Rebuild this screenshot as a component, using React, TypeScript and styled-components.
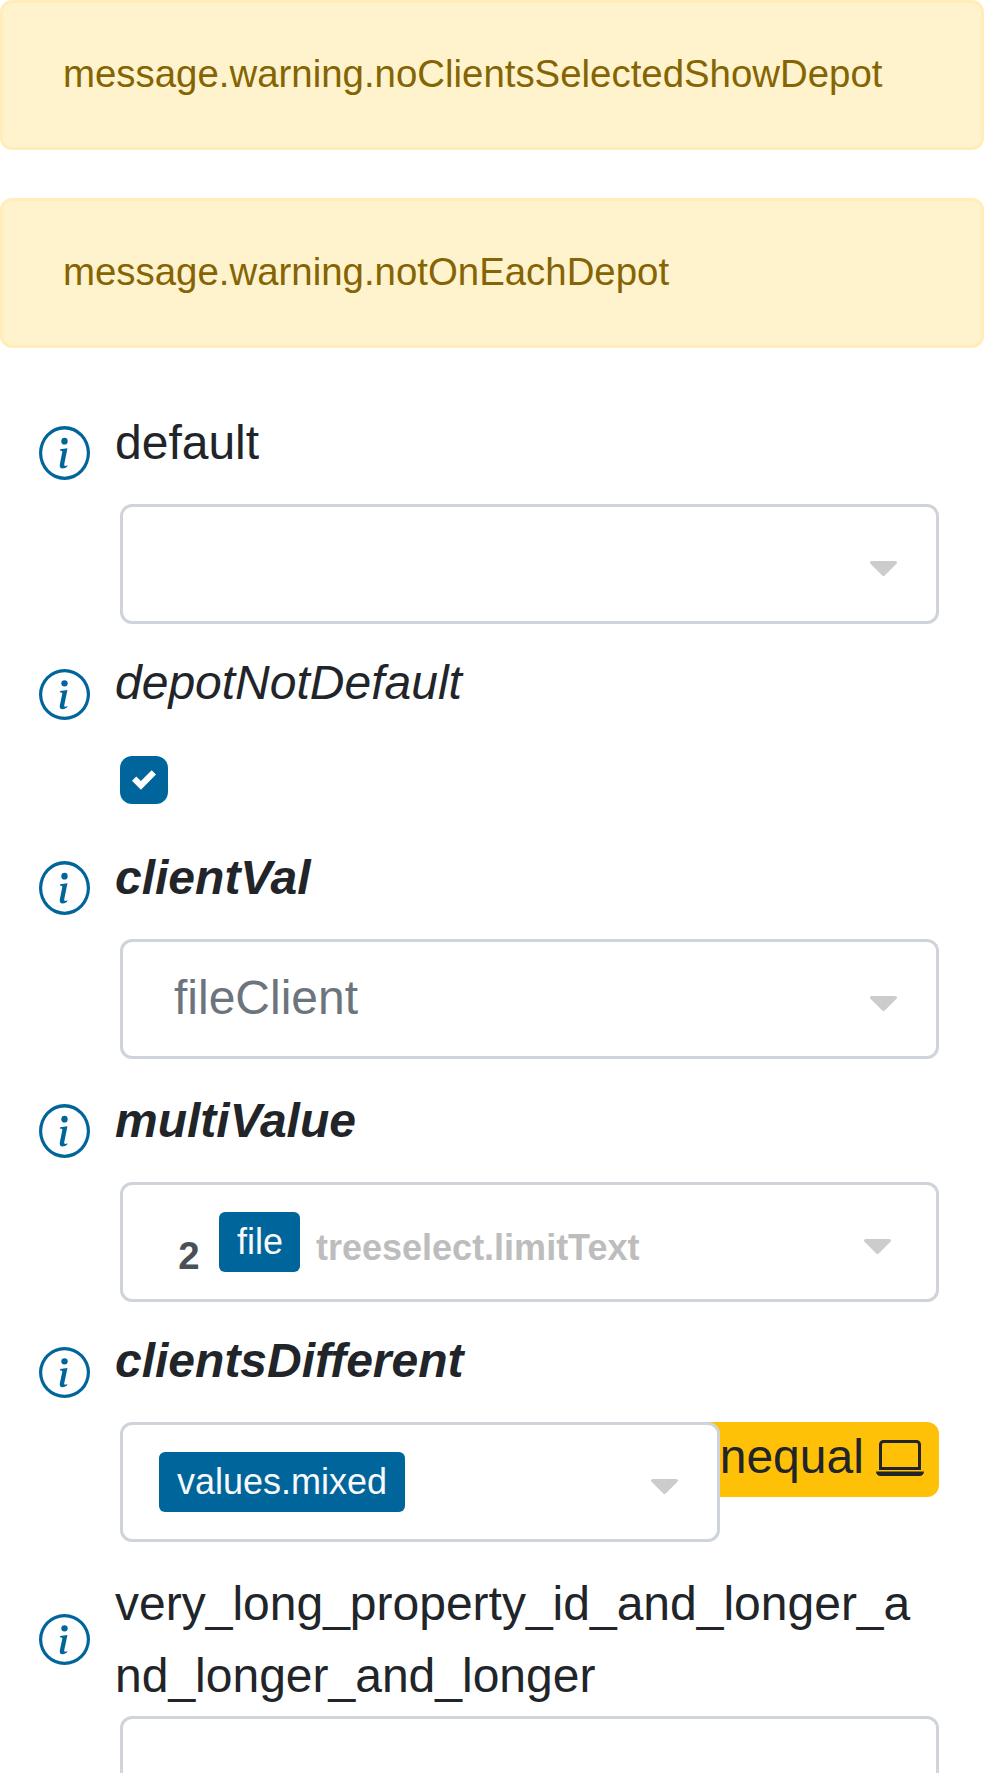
import React from "react";
import styled, { createGlobalStyle, css } from "styled-components";

const GlobalStyle = createGlobalStyle`
  *, *::before, *::after { box-sizing: border-box; }
  body {
    margin: 0;
    background: #fff;
    color: #212529;
    font-family: "Liberation Sans", Arial, sans-serif;
    font-size: 48px;
    line-height: 72px;
  }
`;

const Page = styled.main`
  width: 984px;
  height: 1773px;
  overflow: hidden;
`;

const Alert = styled.div`
  height: 150px;
  margin-bottom: 48px;
  padding: 36px 60px;
  border: 3px solid #ffeeba;
  border-radius: 12px;
  background: #fff3cd;
  color: #856404;
  font-size: 38.4px;
  line-height: 70px;
`;

const PropertyList = styled.section`
  padding-top: 11px;
`;

const Row = styled.div<{ $gap: number }>`
  display: flex;
  align-items: flex-start;
  margin-bottom: ${(p) => p.$gap}px;
`;

const IconCell = styled.div<{ $offset: number }>`
  flex: none;
  display: flex;
  width: 115px;
  padding: ${(p) => p.$offset}px 0 0 39px;
  color: #00659b;
`;

const Property = styled.div`
  width: 824px;
`;

const Label = styled.div<{ $italic?: boolean; $bold?: boolean; $height: number }>`
  height: ${(p) => p.$height}px;
  padding-right: 14px;
  word-break: break-all;
  font-style: ${(p) => (p.$italic ? "italic" : "normal")};
  font-weight: ${(p) => (p.$bold ? 700 : 400)};
`;

const ControlLine = styled.div`
  display: flex;
  align-items: flex-start;
  margin-left: 5px;
`;

const Select = styled.div<{ $narrow?: boolean; $multi?: boolean }>`
  position: relative;
  flex: none;
  display: flex;
  width: ${(p) => (p.$narrow ? 600 : 819)}px;
  height: 120px;
  padding: 0 39px 0 36px;
  border: 3px solid #ced4da;
  border-radius: 12px;
  background: #fff;
  ${(p) => p.$multi && css`padding-right: 45px;`}
`;

const Caret = styled.svg`
  flex: none;
  width: 27px;
  height: 27px;
  margin: 48px 0 0 auto;
  fill: #ccc;
`;

const Value = styled.span`
  padding: 20px 0 0 15px;
  color: #6c757d;
`;

const Count = styled.span`
  width: 60px;
  padding: 35px 0 0 19.2px;
  color: #495057;
  font-size: 38.4px;
  font-weight: 700;
`;

const Tag = styled.span<{ $width: number }>`
  flex: none;
  width: ${(p) => p.$width}px;
  height: 60px;
  margin-top: 27px;
  padding-left: 18px;
  border-radius: 6px;
  background: #00659b;
  color: #f8f9fa;
  font-size: 36px;
  line-height: 60px;
`;

const LimitText = styled.span`
  padding: 27px 0 0 16px;
  color: #bdbdbd;
  font-size: 36px;
  font-weight: 700;
`;

const Badge = styled.span`
  display: flex;
  height: 75px;
  margin-left: -39px;
  padding: 0 15px 0 12px;
  border-radius: 12px;
  background: #ffc107;
  line-height: 70px;
  white-space: pre;
`;

const LaptopSvg = styled.svg`
  width: 48px;
  height: 48px;
  margin: 12px 0 0 -1px;
`;

const Checkbox = styled.span`
  display: flex;
  align-items: center;
  justify-content: center;
  width: 48px;
  height: 48px;
  border-radius: 12px;
  background: #00659b;
`;

const InfoIcon = ({ height }: { height: number }) => (
  <svg width="51" height={height} viewBox="0 0 16 16" preserveAspectRatio="none" fill="currentColor">
    <path d="M8 15A7 7 0 1 0 8 1a7 7 0 0 0 0 14zm0 1A8 8 0 1 0 8 0a8 8 0 0 0 0 16z" fillRule="evenodd" />
    <path d="M8.93 6.588l-2.29.287-.082.38.45.083c.294.07.352.176.288.469l-.738 3.468c-.194.897.105 1.319.808 1.319.545 0 1.178-.252 1.465-.598l.088-.416c-.2.176-.492.246-.686.246-.275 0-.375-.193-.304-.533L8.93 6.588z" />
    <circle cx="8" cy="4.5" r="1" />
  </svg>
);

const Arrow = () => (
  <Caret viewBox="0 0 292.362 292.362">
    <path d="M286.935 69.377c-3.614-3.617-7.898-5.424-12.848-5.424H18.274c-4.952 0-9.233 1.807-12.85 5.424C1.807 72.998 0 77.279 0 82.228c0 4.948 1.807 9.229 5.424 12.847l127.907 127.907c3.621 3.617 7.902 5.428 12.85 5.428s9.233-1.811 12.847-5.428L286.935 95.074c3.613-3.617 5.427-7.898 5.427-12.847 0-4.948-1.814-9.229-5.427-12.85z" />
  </Caret>
);

const Laptop = () => (
  <LaptopSvg viewBox="0 0 16 16" fill="currentColor">
    <path d="M13.5 3a.5.5 0 0 1 .5.5V11H2V3.5a.5.5 0 0 1 .5-.5h11zm-11-1A1.5 1.5 0 0 0 1 3.5V12h14V3.5A1.5 1.5 0 0 0 13.5 2h-11zM0 12.5h16a1.5 1.5 0 0 1-1.5 1.5h-13A1.5 1.5 0 0 1 0 12.5z" />
  </LaptopSvg>
);

interface PropertyRowProps {
  name: string;
  italic?: boolean;
  bold?: boolean;
  gap: number;
  labelHeight?: number;
  iconOffset?: number;
  iconHeight?: number;
  children: React.ReactNode;
}

const PropertyRow = ({
  name, italic, bold, gap, labelHeight = 97, iconOffset = 19, iconHeight = 54, children,
}: PropertyRowProps) => (
  <Row $gap={gap}>
    <IconCell $offset={iconOffset}>
      <InfoIcon height={iconHeight} />
    </IconCell>
    <Property>
      <Label $italic={italic} $bold={bold} $height={labelHeight}>{name}</Label>
      <ControlLine>{children}</ControlLine>
    </Property>
  </Row>
);

export default function App() {
  return (
    <>
      <GlobalStyle />
      <Page>
        <Alert role="alert">message.warning.noClientsSelectedShowDepot</Alert>
        <Alert role="alert">message.warning.notOnEachDepot</Alert>
        <PropertyList>
          <PropertyRow name="default" gap={23}>
            <Select><Arrow /></Select>
          </PropertyRow>
          <PropertyRow name="depotNotDefault" italic gap={38} labelHeight={109} iconOffset={22} iconHeight={51}>
            <Checkbox role="checkbox" aria-checked="true">
              <svg width="24" height="24" viewBox="0 0 8 8" fill="#fff">
                <path d="M6.564.75l-3.59 3.612-1.538-1.55L0 4.26l2.974 2.99L8 2.193z" />
              </svg>
            </Checkbox>
          </PropertyRow>
          <PropertyRow name="clientVal" italic bold gap={26}>
            <Select><Value>fileClient</Value><Arrow /></Select>
          </PropertyRow>
          <PropertyRow name="multiValue" italic bold gap={23}>
            <Select $multi>
              <Count>2</Count>
              <Tag $width={81}>file</Tag>
              <LimitText>treeselect.limitText</LimitText>
              <Arrow />
            </Select>
          </PropertyRow>
          <PropertyRow name="clientsDifferent" italic bold gap={26} iconOffset={22} iconHeight={51}>
            <Select $narrow><Tag $width={246}>values.mixed</Tag><Arrow /></Select>
            <Badge>unequal <Laptop /></Badge>
          </PropertyRow>
          <PropertyRow
            name="very_long_property_id_and_longer_and_longer_and_longer"
            gap={0}
            labelHeight={148}
            iconOffset={46}
            iconHeight={51}
          >
            <Select><Arrow /></Select>
          </PropertyRow>
        </PropertyList>
      </Page>
    </>
  );
}
